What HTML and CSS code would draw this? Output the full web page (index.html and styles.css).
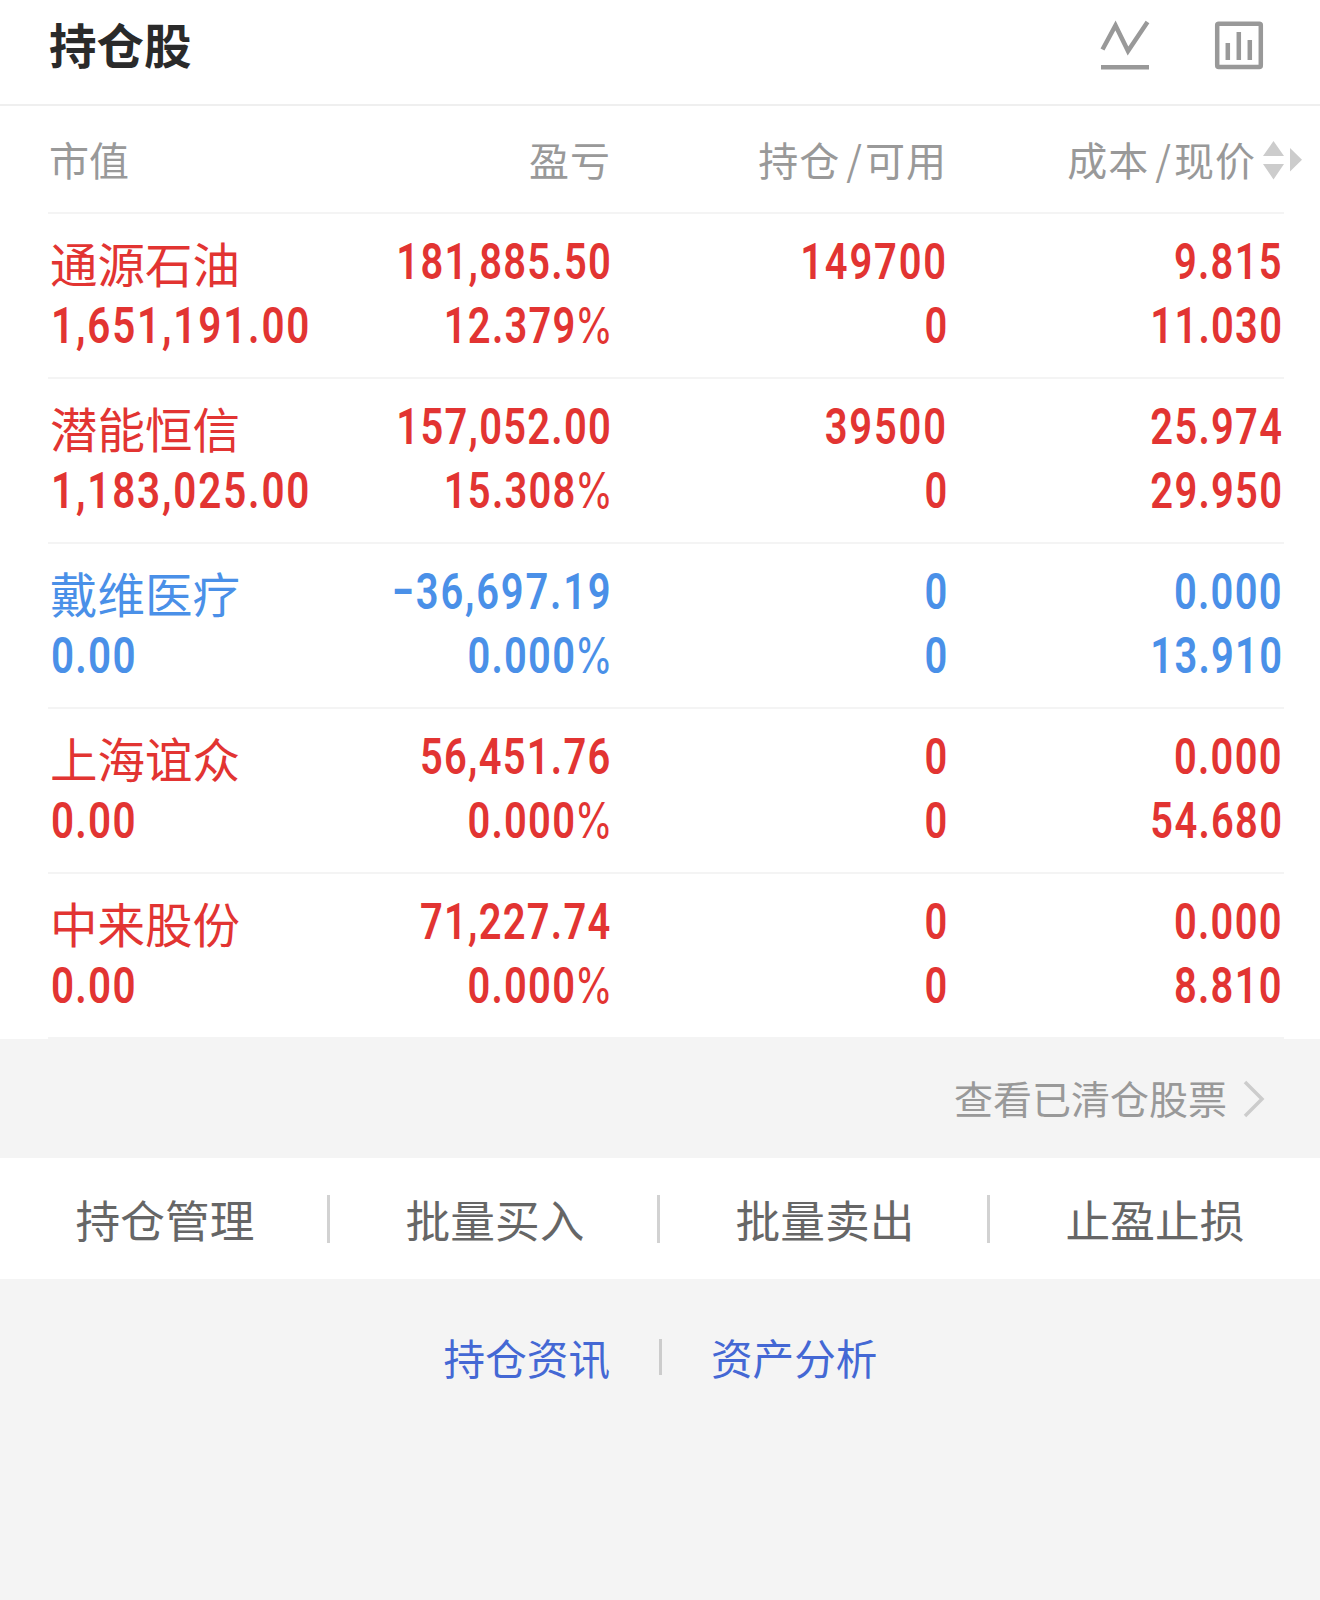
FILE: index.html
```html
<!DOCTYPE html>
<html lang="zh-CN">
<head>
<meta charset="utf-8">
<title>持仓股</title>
<link rel="stylesheet" href="styles.css">
</head>
<body>
<header class="top">
  <h1 class="title">持仓股</h1>
  <div class="tools">
    <svg class="icon" width="50" height="50" viewBox="0 0 50 50"><path d="M2.5 29.5 15.5 5.5 28 31 47.5 2M1 47.2H49"/></svg>
    <svg class="icon" width="50" height="50" viewBox="0 0 50 50"><rect x="3.2" y="3.7" width="43.6" height="43.4" rx="1.5"/><path d="M13.8 23V40M24.8 12V40M35.8 20V40"/></svg>
  </div>
</header>
<main class="holdings">
  <div class="row head">
    <span>市值</span><span>盈亏</span><span>持仓<i class="slash">/</i>可用</span>
    <span class="sortable">成本<i class="slash">/</i>现价<svg class="sort" width="39" height="40" viewBox="0 0 39 40"><path d="M0 16 10.5 1 21 16ZM0 24H21L10.5 39.5ZM27 8 39 19.7 27 31.5Z"/></svg></span>
  </div>
  <div class="row up">
    <div class="cell"><span class="name">通源石油</span><span class="num loose">1,651,191.00</span></div>
    <div class="cell"><span class="num">181,885.50</span><span class="num">12.379<b class="pct">%</b></span></div>
    <div class="cell"><span class="num loose">149700</span><span class="num">0</span></div>
    <div class="cell"><span class="num">9.815</span><span class="num">11.030</span></div>
  </div>
  <div class="row up">
    <div class="cell"><span class="name">潜能恒信</span><span class="num loose">1,183,025.00</span></div>
    <div class="cell"><span class="num">157,052.00</span><span class="num">15.308<b class="pct">%</b></span></div>
    <div class="cell"><span class="num loose">39500</span><span class="num">0</span></div>
    <div class="cell"><span class="num">25.974</span><span class="num">29.950</span></div>
  </div>
  <div class="row down">
    <div class="cell"><span class="name">戴维医疗</span><span class="num">0.00</span></div>
    <div class="cell"><span class="num loose">−36,697.19</span><span class="num">0.000<b class="pct">%</b></span></div>
    <div class="cell"><span class="num">0</span><span class="num">0</span></div>
    <div class="cell"><span class="num">0.000</span><span class="num">13.910</span></div>
  </div>
  <div class="row up">
    <div class="cell"><span class="name">上海谊众</span><span class="num">0.00</span></div>
    <div class="cell"><span class="num">56,451.76</span><span class="num">0.000<b class="pct">%</b></span></div>
    <div class="cell"><span class="num">0</span><span class="num">0</span></div>
    <div class="cell"><span class="num">0.000</span><span class="num">54.680</span></div>
  </div>
  <div class="row up">
    <div class="cell"><span class="name">中来股份</span><span class="num">0.00</span></div>
    <div class="cell"><span class="num">71,227.74</span><span class="num">0.000<b class="pct">%</b></span></div>
    <div class="cell"><span class="num">0</span><span class="num">0</span></div>
    <div class="cell"><span class="num">0.000</span><span class="num">8.810</span></div>
  </div>
</main>
<div class="cleared">
  <span>查看已清仓股票</span>
  <svg class="chevron" width="22" height="38" viewBox="0 0 22 38"><path d="M2 2 19 19 2 36"/></svg>
</div>
<nav class="actions"><span>持仓管理</span><span>批量买入</span><span>批量卖出</span><span>止盈止损</span></nav>
<footer class="links"><span>持仓资讯</span><i class="bar"></i><span>资产分析</span></footer>
</body>
</html>
```
FILE: styles.css
```css
* { box-sizing: border-box; }
body {
  margin: 0;
  min-height: 1600px;
  background: #f4f4f4;
  font-family: "Noto Sans CJK SC", sans-serif;
}
.top {
  display: flex;
  justify-content: space-between;
  height: 106px;
  padding: 0 56px 0 49px;
  background: #fff;
  border-bottom: 2px solid #efefef;
}
.title {
  margin: 0;
  font-size: 47.5px;
  font-weight: 700;
  line-height: 87px;
  color: #2a2a2a;
}
.tools { display: flex; gap: 64px; padding-top: 20px; }
.icon { fill: none; stroke: #999; stroke-width: 4.5; }
.holdings { height: 933px; padding: 0 36px 0 48px; background: #fff; }
.row {
  display: grid;
  grid-template-columns: 282px 280px 336px 335px;
  height: 165px;
  padding: 16px 0 0 2px;
  border-bottom: 2px solid #f4f4f4;
}
.row > * { text-align: right; }
.row > :first-child { text-align: left; }
.head {
  height: 108px;
  padding: 0 0 0 1px;
  font-size: 40px;
  line-height: 106px;
  color: #999;
}
.head > :not(:first-child) { letter-spacing: 1px; }
.slash { font-style: normal; margin: 0 2px 0 6px; }
.sortable { display: flex; justify-content: flex-end; align-items: center; margin-right: -20px; white-space: nowrap; }
.sort { flex: none; margin: 1px 0 0 7px; fill: #ccc; }
.cell { display: flex; flex-direction: column; align-items: flex-end; }
.cell:first-child { align-items: flex-start; }
.name { font-size: 47.5px; line-height: 65px; height: 64px; }
.num {
  height: 64px;
  font-family: Roboto, sans-serif;
  font-size: 50.5px;
  font-weight: 600;
  letter-spacing: 1.6px;
  line-height: 64.5px;
  white-space: nowrap;
  transform: scaleX(.79);
  transform-origin: right;
}
.loose { letter-spacing: 2.3px; }
.cell:first-child .num { margin-left: 1px; transform: scaleX(.8); transform-origin: left; }
.pct {
  margin-left: -2px;
  font-family: Inter, sans-serif;
  font-size: 49px;
  font-weight: 400;
  letter-spacing: -1px;
  line-height: 1;
}
.up { color: #e23432; }
.down { color: #4a90e8; }
.cleared {
  display: flex;
  justify-content: flex-end;
  align-items: center;
  gap: 16px;
  height: 119px;
  padding-right: 55px;
  font-size: 39px;
  line-height: 60px;
  color: #999;
}
.cleared span { padding-bottom: 4px; }
.chevron { fill: none; stroke: #ccc; stroke-width: 3.5; }
.actions {
  display: grid;
  grid-template-columns: repeat(4, 1fr);
  height: 121px;
  padding-top: 37px;
  background: #fff;
}
.actions span {
  height: 48px;
  padding-left: 3px;
  font-size: 44.7px;
  line-height: 48px;
  text-align: center;
  color: #666;
  border-right: 3px solid #d2d2d2;
}
.actions span:last-child { border-right-color: transparent; }
.links {
  display: flex;
  justify-content: center;
  align-items: center;
  gap: 49px;
  padding: 48px 0 0 1px;
  font-size: 41.6px;
  line-height: 60px;
  color: #4468d4;
}
.bar { width: 3px; height: 36px; margin-bottom: 1px; background: #ccc; }
```
